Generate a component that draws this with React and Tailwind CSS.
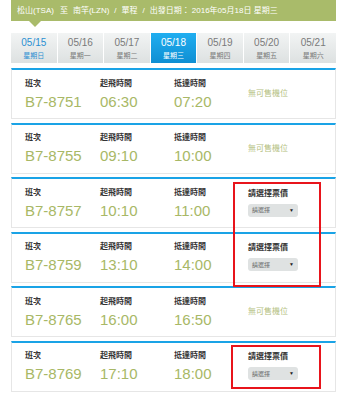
import React from 'react';

const days = [
  { d: '05/15', w: '星期日', tone: 'sun' },
  { d: '05/16', w: '星期一' },
  { d: '05/17', w: '星期二' },
  { d: '05/18', w: '星期三', active: true },
  { d: '05/19', w: '星期四' },
  { d: '05/20', w: '星期五' },
  { d: '05/21', w: '星期六' },
];

const flights = [
  { no: 'B7-8751', dep: '06:30', arr: '07:20', pick: false },
  { no: 'B7-8755', dep: '09:10', arr: '10:00', pick: false },
  { no: 'B7-8757', dep: '10:10', arr: '11:00', pick: true },
  { no: 'B7-8759', dep: '13:10', arr: '14:00', pick: true },
  { no: 'B7-8765', dep: '16:00', arr: '16:50', pick: false },
  { no: 'B7-8769', dep: '17:10', arr: '18:00', pick: true },
];

const font = { fontFamily: '"Liberation Sans", "Noto Sans CJK TC", sans-serif' };

const Col = ({ label, value }) => (
  <div className="flex flex-col">
    <span className="text-[8px] font-bold text-[#333] leading-none">{label}</span>
    <span className="text-[15px] text-[#a8b866] leading-none mt-[6px]">{value}</span>
  </div>
);

const FlightCard = ({ f }) => (
  <div className="h-[51px] bg-white border border-[#e6e6e6] border-t-2 border-t-[#1aa3e6] grid grid-cols-[75px_74px_74px_1fr] pl-[13px] items-center">
    <Col label="班次" value={f.no} />
    <Col label="起飛時間" value={f.dep} />
    <Col label="抵達時間" value={f.arr} />
    {f.pick ? (
      <div className="flex flex-col">
        <span className="text-[8px] font-bold text-[#333] leading-none">請選擇票價</span>
        <div className="mt-[6px] w-[50px] h-[13px] rounded-[3px] bg-[#dfe2e2] flex items-center justify-between px-[4px]">
          <span className="text-[6px] text-[#666] leading-none">請選擇</span>
          <span className="text-[5px] text-[#222] leading-none">▼</span>
        </div>
      </div>
    ) : (
      <span className="text-[8px] text-[#b4c080] leading-none">無可售機位</span>
    )}
  </div>
);

const App = () => {
  return (
    <div className="w-[350px] h-[402px] bg-white relative overflow-hidden" style={font}>
      <div className="ml-[11px] w-[325px]">
        <div className="h-[21px] bg-[#a9bb6a] flex items-center pl-[6px] text-white text-[8px] leading-none">
          <span>松山(TSA)</span>
          <span className="ml-[6px]">至</span>
          <span className="ml-[5px]">南竿(LZN)</span>
          <span className="ml-[5px]">/</span>
          <span className="ml-[5px]">單程</span>
          <span className="ml-[5px]">/</span>
          <span className="ml-[5px]">出發日期：</span>
          <span className="ml-[2px]">2016年05月18日 星期三</span>
        </div>
        <div className="ml-[18px] w-0 h-0 border-l-[6px] border-r-[6px] border-t-[6px] border-l-transparent border-r-transparent border-t-[#a9bb6a]" />

        <div className="mt-[6px] h-[30px] grid grid-cols-7 gap-px">
          {days.map((t) => (
            <div
              key={t.d}
              className={
                t.active
                  ? 'flex flex-col items-center justify-center bg-gradient-to-b from-[#20aef0] to-[#0f8fd3] text-white'
                  : 'flex flex-col items-center justify-center bg-gradient-to-b from-[#f2f4f4] to-[#dde1e1]'
              }
            >
              <span
                className={
                  t.active
                    ? 'text-[10px] leading-none'
                    : t.tone === 'sun'
                    ? 'text-[10px] leading-none text-[#2b8fd2]'
                    : 'text-[10px] leading-none text-[#7a7a7a]'
                }
              >
                {t.d}
              </span>
              <span
                className={
                  t.active
                    ? 'text-[7px] leading-none mt-[4px]'
                    : t.tone === 'sun'
                    ? 'text-[7px] leading-none mt-[4px] text-[#2b8fd2]'
                    : 'text-[7px] leading-none mt-[4px] text-[#7a7a7a]'
                }
              >
                {t.w}
              </span>
            </div>
          ))}
        </div>

        <div className="mt-[5px] flex flex-col gap-[3.5px]">
          {flights.map((f) => (
            <FlightCard key={f.no} f={f} />
          ))}
        </div>
      </div>

      <div className="absolute left-[233px] top-[182px] w-[88px] h-[105px] border-2 border-[#e8141b]" />
      <div className="absolute left-[231px] top-[345px] w-[90px] h-[44px] border-2 border-[#e8141b]" />
    </div>
  );
};

export default App;
